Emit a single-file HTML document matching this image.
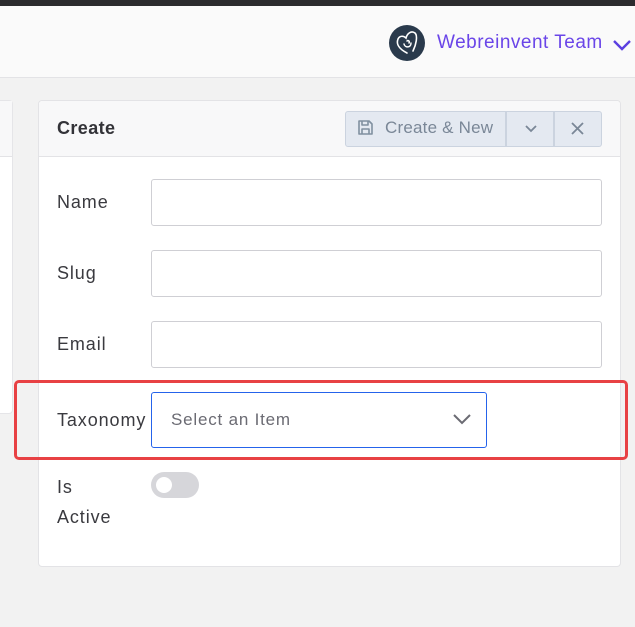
<!DOCTYPE html>
<html><head><meta charset="utf-8"><style>
*{box-sizing:border-box;margin:0;padding:0}
body{width:635px;height:627px;overflow:hidden;background:#f2f2f2;font-family:"Liberation Sans",sans-serif;position:relative}
.abs{position:absolute}
.topbar{left:0;top:0;width:635px;height:6px;background:#2b2b2e}
.header{left:0;top:6px;width:635px;height:72px;background:#fafafa;border-bottom:1px solid #e3e3e6}
.left{left:0;top:100px;width:13px;height:314px;background:#fff;border:1px solid #e5e5e8;border-left:none;border-radius:0 4px 4px 0}
.lefth{left:0;top:101px;width:12px;height:56px;background:#f8f8f9;border-bottom:1px solid #e3e3e6}
.card{left:38px;top:100px;width:583px;height:467px;background:#fff;border:1px solid #e3e3e6;border-radius:4px}
.cardh{left:39px;top:101px;width:581px;height:56px;background:#f8f8f9;border-bottom:1px solid #e3e3e6;border-radius:4px 4px 0 0}
.label{font-size:18px;color:#3a3a3f;letter-spacing:0.9px}
.input{left:151px;width:451px;height:47px;border:1px solid #cfcfd4;border-radius:3px;background:#fff}
.btn{top:111px;height:36px;background:#e4e9f1;border:1px solid #cbd3df;color:#7a8797;font-size:17px}
</style></head><body>
<div class="abs topbar"></div>
<div class="abs header"></div>
<svg class="abs" style="left:389px;top:25px" width="36" height="36" viewBox="0 0 36 36">
<circle cx="18" cy="18" r="18" fill="#2a3a4c"/>
<path d="M18 28 C10 24 7 19 9 14 C11 10 15 11 17 13 C18 9 22 5 26 8 C29 11 27 20 24 26" fill="none" stroke="#fff" stroke-width="1.6" stroke-linecap="round"/>
<path d="M15 19 C16 23 22 23 22 18 M18 16 C19 15 21 16 20 18" fill="none" stroke="#fff" stroke-width="1.5" stroke-linecap="round"/>
</svg>
<div class="abs" style="left:437px;top:32px;font-size:19px;letter-spacing:0.5px;color:#6a45e8">Webreinvent Team</div>
<svg class="abs" style="left:611px;top:38px" width="22" height="14" viewBox="0 0 22 14"><path d="M3 3 L11 11 L19 3" fill="none" stroke="#5b3fe0" stroke-width="2.4"/></svg>

<div class="abs left"></div>
<div class="abs lefth"></div>
<div class="abs card"></div>
<div class="abs cardh"></div>
<div class="abs" style="left:57px;top:118px;font-size:18px;font-weight:bold;color:#333338;letter-spacing:0.4px">Create</div>

<div class="abs btn" style="left:345px;width:161px;border-radius:3px 0 0 3px"></div>
<svg class="abs" style="left:357px;top:119px" width="17" height="17" viewBox="0 0 17 17"><path d="M2 2 H12 L15 5 V15 H2 Z M5 2 V6 H11 V2 M5 15 V10 H12 V15" fill="none" stroke="#8090a0" stroke-width="1.6" stroke-linejoin="round"/></svg>
<div class="abs" style="left:385px;top:118px;font-size:17px;color:#7a8797;letter-spacing:0.2px">Create &amp; New</div>
<div class="abs btn" style="left:506px;width:48px"></div>
<svg class="abs" style="left:524px;top:124px" width="14" height="10" viewBox="0 0 14 10"><path d="M2 2 L7 7 L12 2" fill="none" stroke="#7a8797" stroke-width="1.8"/></svg>
<div class="abs btn" style="left:554px;width:48px;border-radius:0 3px 3px 0"></div>
<svg class="abs" style="left:570px;top:121px" width="15" height="15" viewBox="0 0 15 15"><path d="M2 2 L13 13 M13 2 L2 13" fill="none" stroke="#7a8797" stroke-width="1.8"/></svg>

<div class="abs label" style="left:57px;top:192px">Name</div>
<div class="abs input" style="top:179px"></div>
<div class="abs label" style="left:57px;top:263px">Slug</div>
<div class="abs input" style="top:250px"></div>
<div class="abs label" style="left:57px;top:334px">Email</div>
<div class="abs input" style="top:321px"></div>

<div class="abs label" style="left:57px;top:410px">Taxonomy</div>
<div class="abs" style="left:151px;top:392px;width:336px;height:56px;border:1px solid #2563eb;border-radius:3px;background:#fff"></div>
<div class="abs" style="left:171px;top:410px;font-size:17px;color:#6b6b73;letter-spacing:0.8px">Select an Item</div>
<svg class="abs" style="left:452px;top:413px" width="20" height="12" viewBox="0 0 20 12"><path d="M2 2 L10 10 L18 2" fill="none" stroke="#6b6b73" stroke-width="2"/></svg>

<div class="abs" style="left:14px;top:380px;width:614px;height:80px;border:3px solid #e84144;border-radius:5px"></div>

<div class="abs label" style="left:57px;top:477px">Is</div>
<div class="abs label" style="left:57px;top:507px">Active</div>
<div class="abs" style="left:151px;top:472px;width:48px;height:26px;border-radius:13px;background:#d6d6da"></div>
<div class="abs" style="left:156px;top:477px;width:16px;height:16px;border-radius:50%;background:#fff"></div>
</body></html>
